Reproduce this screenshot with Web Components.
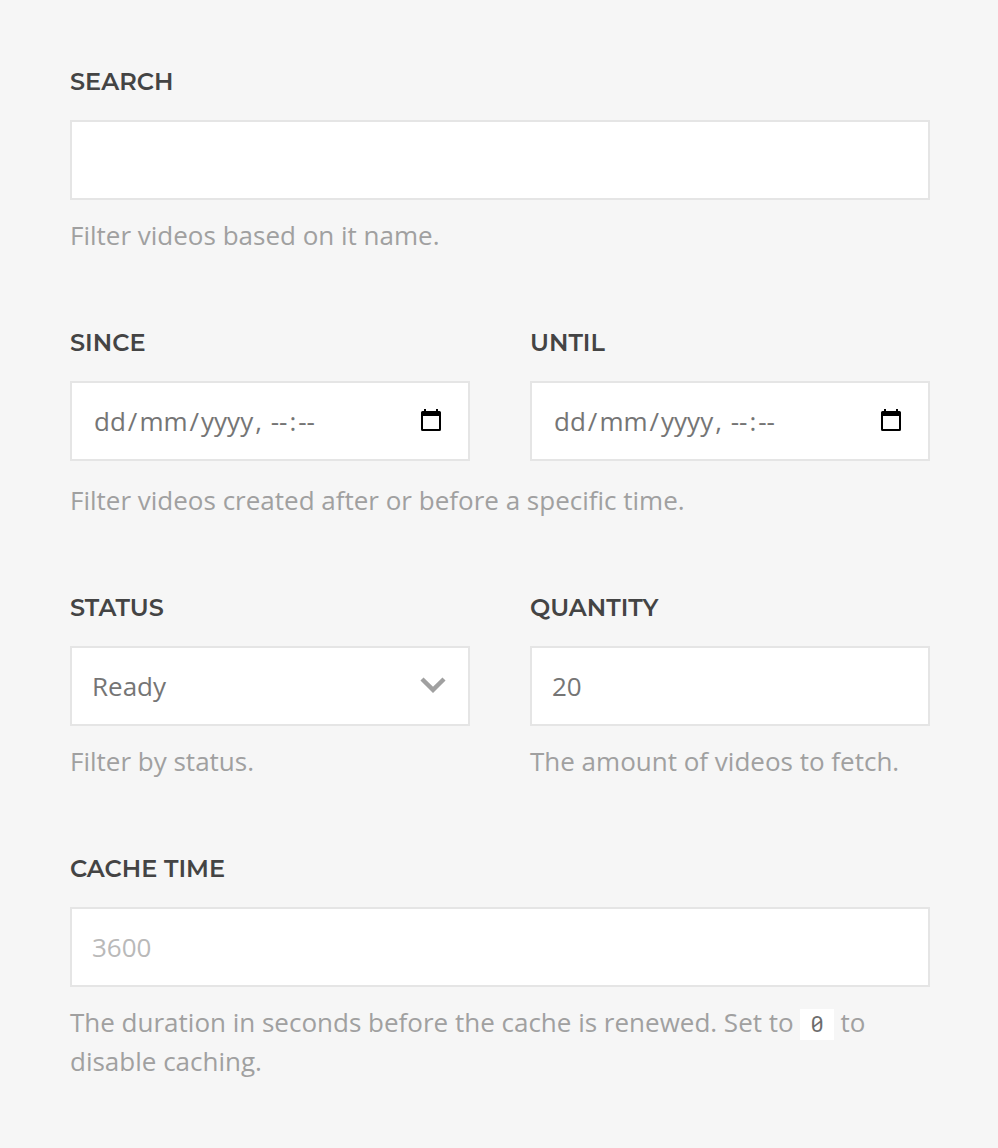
<!DOCTYPE html>
<html lang="en"><head><meta charset="utf-8"><title>Video filters</title>
<style>
html,body{margin:0;background:#f6f6f6}
body{font-family:"Open Sans",sans-serif}
</style></head><body>
<filter-form></filter-form>
<script>
class FieldBlock extends HTMLElement{
 constructor(){super();this.attachShadow({mode:"open"}).innerHTML=`<style>
:host{display:block;min-width:0}
.label{font:600 24px/30px Montserrat,"Open Sans",sans-serif;color:#444;height:30px;margin-bottom:23px;white-space:nowrap}
</style><div class="label"></div><slot></slot>`;}
 connectedCallback(){this.shadowRoot.querySelector(".label").textContent=this.getAttribute("label");}
}
customElements.define("field-block",FieldBlock);
class InputBox extends HTMLElement{
 constructor(){super();this.attachShadow({mode:"open"}).innerHTML=`<style>
:host{display:flex;align-items:center;justify-content:space-between;box-sizing:border-box;height:80px;border:2px solid #e5e5e5;background:#fff;padding:0 20px;font-size:26px;line-height:36px;color:#757575;white-space:pre}
:host([muted]){color:#b9b9b9}
</style><slot></slot><slot name="icon"></slot>`;}
}
customElements.define("input-box",InputBox);
class DateMask extends HTMLElement{
 constructor(){super();this.attachShadow({mode:"open"}).innerHTML=`<style>
:host{display:block}span{padding:0 2px}
</style><span>dd</span>/<span>mm</span>/<span>yyyy</span>, <span>--</span>:<span>--</span>`;}
}
customElements.define("date-mask",DateMask);
class HelpText extends HTMLElement{
 constructor(){super();this.attachShadow({mode:"open"}).innerHTML=`<style>
:host{display:block;font-size:26px;line-height:39px;color:#a0a0a0;margin-top:16px}
</style><slot></slot>`;}
}
customElements.define("help-text",HelpText);
class CodeChip extends HTMLElement{
 constructor(){super();this.attachShadow({mode:"open"}).innerHTML=`<style>
:host{display:inline-block;box-sizing:border-box;width:33.4px;height:31px;background:#fff;color:#6c6c6c;font:22px/29px "Roboto Mono","Noto Sans Mono","DejaVu Sans Mono",monospace;text-align:center;vertical-align:bottom;margin:0 0 2px}
</style><slot></slot>`;}
}
customElements.define("code-chip",CodeChip);
class UiIcon extends HTMLElement{
 constructor(){super();this.attachShadow({mode:"open"});}
 connectedCallback(){const cal=this.getAttribute("name")==="calendar";
 this.shadowRoot.innerHTML=`<style>:host{display:block;flex:none;margin-right:${cal?7:2}px}svg{display:block;margin-bottom:${cal?2:1}px}</style>`+(cal?
 `<svg width="20" height="22" viewBox="0 0 20 22"><path fill="#000" fill-rule="evenodd" d="M3 0h2v2h10V0h2v2h1.500a1.500 1.500 0 0 1 1.500 1.500v17a1.500 1.500 0 0 1-1.500 1.500h-17A1.500 1.500 0 0 1 0 20.500v-17A1.500 1.500 0 0 1 1.500 2H3zM2 7v13h16V7z"/></svg>`:
 `<svg width="26" height="17" viewBox="0 0 26 17"><path fill="none" stroke="#a0a0a0" stroke-width="4.400" d="M2 2L13 12.900L24 2"/></svg>`);}
}
customElements.define("ui-icon",UiIcon);
class FilterForm extends HTMLElement{
 constructor(){super();this.attachShadow({mode:"open"}).innerHTML=`<style>
:host{display:block;box-sizing:border-box;padding:67px 68px 0 70px;height:1148px}
.row{display:grid;grid-template-columns:1fr 1fr;column-gap:60px}
section{height:261px}.dates{height:265px}.dates help-text{margin-top:20px}
</style>
<section><field-block label="SEARCH"><input-box></input-box></field-block><help-text>Filter videos based on it name.</help-text></section>
<section class="dates"><div class="row"><field-block label="SINCE"><input-box><date-mask></date-mask><ui-icon slot="icon" name="calendar"></ui-icon></input-box></field-block><field-block label="UNTIL"><input-box><date-mask></date-mask><ui-icon slot="icon" name="calendar"></ui-icon></input-box></field-block></div><help-text>Filter videos created after or before a specific time.</help-text></section>
<section class="row"><field-block label="STATUS"><input-box>Ready<ui-icon slot="icon" name="chevron"></ui-icon></input-box><help-text>Filter by status.</help-text></field-block><field-block label="QUANTITY"><input-box>20</input-box><help-text>The amount of videos to fetch.</help-text></field-block></section>
<section><field-block label="CACHE TIME"><input-box muted>3600</input-box></field-block><help-text>The duration in seconds before the cache is renewed. Set to <code-chip>0</code-chip> to disable caching.</help-text></section>`;}
}
customElements.define("filter-form",FilterForm);
</script></body></html>
